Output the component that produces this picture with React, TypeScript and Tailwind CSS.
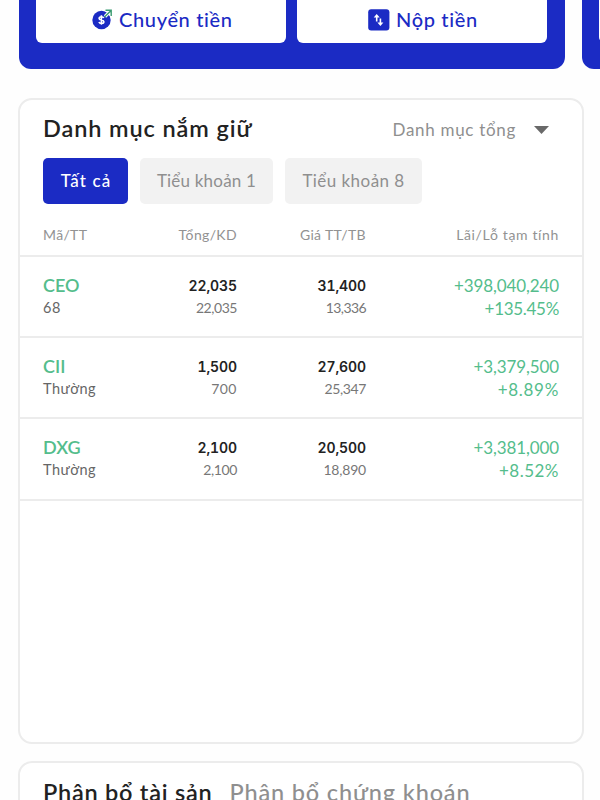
const holdings = [
  { code: 'CEO', type: '68', total: '22,035', avail: '22,035', price: '31,400', avg: '13,336', gain: '+398,040,240', pct: '+135.45%', availTrack: '-tracking-[0.45px]', avgTrack: '-tracking-[0.6px]', pctTrack: '-tracking-[0.3px]' },
  { code: 'CII', type: 'Thường', total: '1,500', avail: '700', price: '27,600', avg: '25,347', gain: '+3,379,500', pct: '+8.89%', availTrack: 'tracking-[0.5px]', avgTrack: '-tracking-[0.4px]', pctTrack: 'tracking-[0.7px]' },
  { code: 'DXG', type: 'Thường', total: '2,100', avail: '2,100', price: '20,500', avg: '18,890', gain: '+3,381,000', pct: '+8.52%', availTrack: '-tracking-[0.4px]', avgTrack: '-tracking-[0.2px]', pctTrack: 'tracking-[0.5px]' },
];

function TransferIcon() {
  return (
    <svg width="21" height="21" viewBox="0 0 21 21" fill="none">
      <circle cx="9.5" cy="11" r="9.2" fill="#1b2bc4" />
      <path d="M11.8 9c-.5-1-1.2-1.3-2.4-1.3-1.4 0-2.3.6-2.3 1.7 0 2.4 4.8.9 4.8 3.4 0 1.1-1 1.7-2.4 1.7-1.3 0-2.2-.5-2.6-1.5M9.4 6.2v9.6" stroke="#fff" strokeWidth="1.6" />
      <path d="M13 7.5L17.5 3M13.5 1.5h5.5V7" stroke="#fff" strokeWidth="3.2" />
      <path d="M12.5 8L18.8 1.7M13.5 1.3h5.7V7" stroke="#3b9b72" strokeWidth="1.4" />
    </svg>
  );
}

function DepositIcon() {
  return (
    <svg width="22" height="22" viewBox="0 0 22 22" fill="none">
      <rect x="0.2" y="0.2" width="21.2" height="21.4" rx="3" fill="#1b2bc4" />
      <path d="M8.7 12.5V7M12.4 9.5V15" stroke="#fff" strokeWidth="1.6" />
      <path d="M5.7 8.4l3-3.4 3 3.4zM9.4 13.6l3 3.4 3-3.4z" fill="#fff" />
    </svg>
  );
}

export default function App() {
  return (
    <div className="h-[800px] w-[600px] overflow-hidden bg-[#fefefe] font-['Lato','Noto_Sans',sans-serif] whitespace-nowrap">
      <div className="flex h-[69px] gap-[17px] pl-[19px]">
        <div className="flex w-[546px] shrink-0 gap-[11px] rounded-b-xl bg-[#1b2bc4] pr-[18px] pb-[26px] pl-[17px]">
          <div className="flex w-[250px] shrink-0 items-start rounded-b-md bg-white pt-[9px] pl-[56px] text-[#1b2bc4]">
            <TransferIcon />
            <span className="-mt-[2px] ml-[6px] text-[20px] leading-6 font-medium tracking-[0.65px]">Chuyển tiền</span>
          </div>
          <div className="flex w-[250px] shrink-0 items-start rounded-b-md bg-white pt-[9px] pl-[71px] text-[#1b2bc4]">
            <DepositIcon />
            <span className="-mt-[2px] ml-[6px] text-[20px] leading-6 font-medium tracking-[0.65px]">Nộp tiền</span>
          </div>
        </div>
        <div className="w-[40px] shrink-0 rounded-bl-xl bg-[#1b2bc4] pl-[17px]">
          <div className="h-[43px] rounded-bl-md bg-white" />
        </div>
      </div>

      <div className="mt-[29px] ml-[18px] flex h-[646px] w-[566px] flex-col rounded-[14px] border-2 border-[#ececec] bg-white">
        <div className="flex h-[58px] items-center justify-between pr-[33px] pl-[23px]">
          <h2 className="text-[23.5px] font-semibold tracking-[0.9px] text-[#222]">Danh mục nắm giữ</h2>
          <div className="flex items-center gap-[18px] pt-[2px] text-[17px] tracking-[0.7px] text-[#8f8f8f]">
            <span>Danh mục tổng</span>
            <svg width="15" height="8" viewBox="0 0 15 8">
              <path d="M0 0h15L7.5 8z" fill="#696969" />
            </svg>
          </div>
        </div>
        <div className="flex h-[46px] gap-3 pl-[23px] text-[17px] tracking-[0.2px] text-[#8f8f8f]">
          <button className="w-[85px] rounded-[5px] bg-[#1b2bc4] pl-px font-medium tracking-[1.1px] text-white">Tất cả</button>
          <button className="w-[133px] rounded-[5px] bg-[#f2f2f2]">Tiểu khoản 1</button>
          <button className="w-[137px] rounded-[5px] bg-[#f2f2f2] tracking-[0.45px]">Tiểu khoản 8</button>
        </div>
        <div className="grid h-[53px] grid-cols-[90px_104px_129px_193px] items-center border-b-2 border-[#ececec] pt-[10px] pl-[23px] text-right text-[14px] tracking-[0.35px] text-[#929292]">
          <span className="text-left">Mã/TT</span>
          <span>Tổng/KD</span>
          <span>Giá TT/TB</span>
          <span className="tracking-[0.65px]">Lãi/Lỗ tạm tính</span>
        </div>
        {holdings.map((h) => (
          <div key={h.code} className="grid h-[81.2px] grid-cols-[90px_104px_129px_193px] border-b-2 border-[#ececec] pt-[17px] pl-[23px] text-right text-[14px] leading-[22.5px] text-[#777]">
            <div className="text-left">
              <div className="text-[18px] font-semibold text-[#54bd8c]">{h.code}</div>
              <div className="text-[14.5px] tracking-[0.5px] text-[#666]">{h.type}</div>
            </div>
            <div>
              <div className="pt-px font-['Inter'] leading-[21.5px] font-semibold -tracking-[0.1px] text-[#222] tabular-nums">{h.total}</div>
              <div className={h.availTrack}>{h.avail}</div>
            </div>
            <div>
              <div className="pt-px font-['Inter'] leading-[21.5px] font-semibold -tracking-[0.1px] text-[#222] tabular-nums">{h.price}</div>
              <div className={h.avgTrack}>{h.avg}</div>
            </div>
            <div className="text-[17px] leading-[23px] text-[#54bd8c]">
              <div className="-tracking-[0.12px]">{h.gain}</div>
              <div className={h.pctTrack}>{h.pct}</div>
            </div>
          </div>
        ))}
      </div>

      <div className="mt-[17px] ml-[18px] flex h-[200px] w-[566px] gap-[17px] rounded-[14px] border-2 border-[#ececec] bg-white pt-[15px] pl-[23px] text-[23.5px] leading-7">
        <span className="font-semibold tracking-[0.75px] text-[#222]">Phân bổ tài sản</span>
        <span className="font-medium tracking-[0.85px] text-[#8f8f8f]">Phân bổ chứng khoán</span>
      </div>
    </div>
  );
}
